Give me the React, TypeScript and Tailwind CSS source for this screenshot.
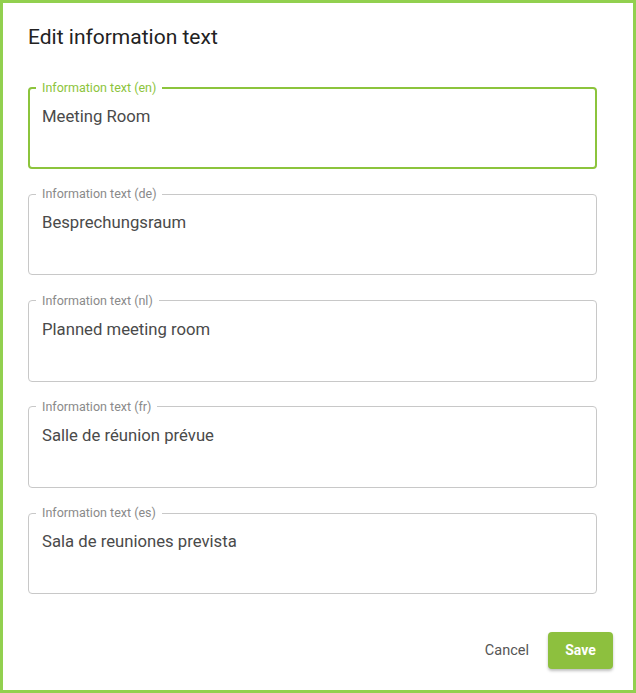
import React from "react";

const fields = [
  { lang: "en", value: "Meeting Room", focused: true },
  { lang: "de", value: "Besprechungsraum", focused: false },
  { lang: "nl", value: "Planned meeting room", focused: false },
  { lang: "fr", value: "Salle de réunion prévue", focused: false },
  { lang: "es", value: "Sala de reuniones prevista", focused: false },
];

function Field({ lang, value, focused }: { lang: string; value: string; focused: boolean }) {
  return (
    <fieldset
      className={
        focused
          ? "m-0 h-[89px] rounded-[4px] border-2 border-[#8cc43c] p-0"
          : "m-0 h-[89px] rounded-[4px] border border-[#c8c8c8] p-0"
      }
    >
      <legend
        className={
          focused
            ? "ml-[6px] px-[6px] text-[12.5px] leading-[16px] text-[#8cc43c]"
            : "ml-[7px] px-[6px] text-[12.5px] leading-[16px] text-[#8a8a8a]"
        }
      >
        Information text ({lang})
      </legend>
      <div
        className={
          focused
            ? "pl-[12px] pt-[9px] text-[16.7px] leading-[24px] text-[#4a4a4a]"
            : "pl-[13px] pt-[9px] text-[16.7px] leading-[24px] text-[#4a4a4a]"
        }
      >
        {value}
      </div>
    </fieldset>
  );
}

export default function App() {
  return (
    <div
      className="flex h-[693px] w-[636px] flex-col border-[3px] border-[#92d04f] bg-white"
      style={{ fontFamily: "Roboto, 'Liberation Sans', sans-serif" }}
    >
      <h1 className="ml-[25px] mt-[20px] text-[21px] font-medium leading-[28px] text-[#222222] [font-weight:450]">
        Edit information text
      </h1>
      <div className="ml-[25px] mr-[36px] mt-[29px] flex flex-col gap-[17.25px]">
        {fields.map((f) => (
          <Field key={f.lang} {...f} />
        ))}
      </div>
      <div className="mr-[20px] mt-[38px] flex items-center justify-end gap-[3px]">
        <button className="h-[37px] px-[16px] text-[14.5px] font-normal text-[#555555]">Cancel</button>
        <button className="h-[37px] w-[65px] rounded-[4px] bg-[#8dc03e] text-[14px] font-bold text-white shadow-[0_2px_3px_rgba(0,0,0,0.25)]">
          Save
        </button>
      </div>
    </div>
  );
}
